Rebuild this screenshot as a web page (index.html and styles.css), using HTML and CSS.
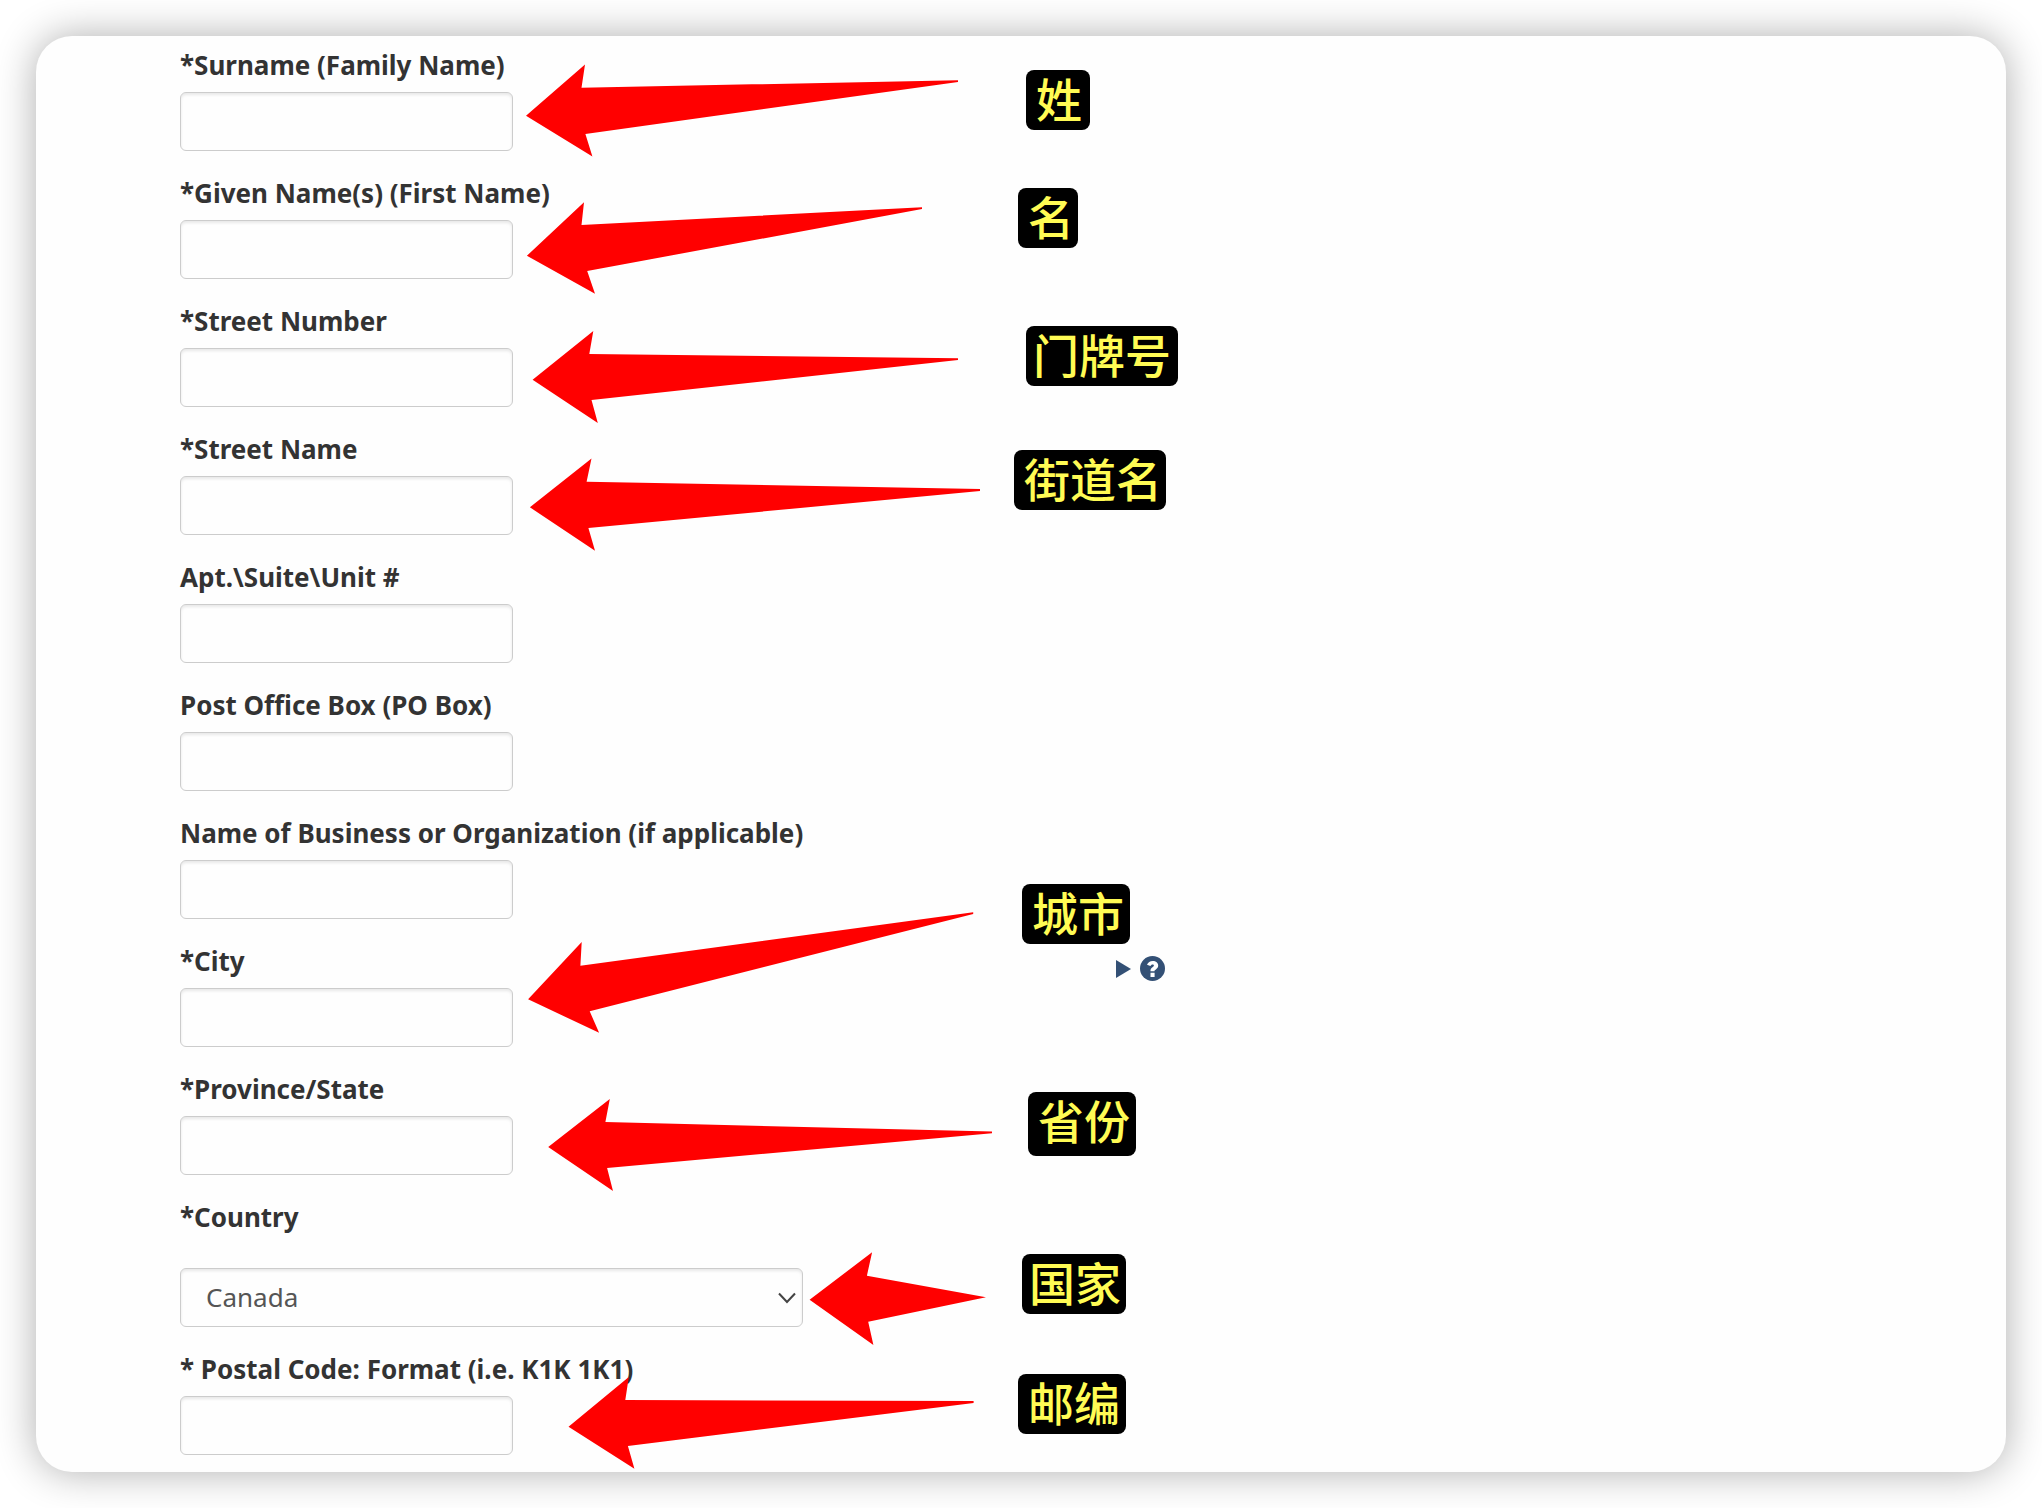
FILE: index.html
```html
<!DOCTYPE html>
<html lang="en">
<head>
<meta charset="utf-8">
<title>Address form</title>
<link rel="stylesheet" href="styles.css">
</head>
<body>
<main class="card">
  <form class="form">
    <div class="field"><label for="surname">*Surname (Family Name)</label><input class="control" id="surname" type="text"></div>
    <div class="field"><label for="given">*Given Name(s) (First Name)</label><input class="control" id="given" type="text"></div>
    <div class="field"><label for="street-number">*Street Number</label><input class="control" id="street-number" type="text"></div>
    <div class="field"><label for="street-name">*Street Name</label><input class="control" id="street-name" type="text"></div>
    <div class="field"><label for="unit">Apt.\Suite\Unit #</label><input class="control" id="unit" type="text"></div>
    <div class="field"><label for="po-box">Post Office Box (PO Box)</label><input class="control" id="po-box" type="text"></div>
    <div class="field"><label for="business">Name of Business or Organization (if applicable)</label><input class="control" id="business" type="text"></div>
    <div class="field">
      <div class="field-head">
        <label for="city">*City</label>
        <details class="help">
          <summary aria-label="Help">
            <svg class="marker" width="15" height="18" viewBox="0 0 15 18"><path d="M0 0 15 9 0 18z"/></svg>
            <svg width="25" height="25" viewBox="0 0 25 25"><circle cx="12.500" cy="12.500" r="12.500"/><path class="mark" d="M7 8.800C8 6.400 10 5 12.800 5c3.200 0 5.400 1.800 5.400 4.600 0 1.800-.9 2.900-2.300 3.800-1.100.7-1.400 1-1.400 1.700v.1h-4v-.6c0-1.600.6-2.400 2-3.300 1-.7 1.400-1 1.400-1.700 0-.7-.5-1.100-1.300-1.100-1 0-1.600.5-2.200 1.600zM10.500 16.700h4.100v4.200h-4.100z"/></svg>
          </summary>
        </details>
      </div>
      <input class="control" id="city" type="text">
    </div>
    <div class="field"><label for="province">*Province/State</label><input class="control" id="province" type="text"></div>
    <div class="field field-select">
      <label for="country">*Country</label>
      <div class="select">
        <select class="control" id="country"><option>Canada</option></select>
        <svg class="chevron" width="18" height="12" viewBox="0 0 18 12"><path d="M1 1.500 9 10 17 1.500"/></svg>
      </div>
    </div>
    <div class="field"><label for="postal">* Postal Code: Format (i.e. K1K 1K1)</label><input class="control" id="postal" type="text"></div>
  </form>

  <div class="notes" lang="zh-CN">
    <svg class="arrows" width="1970" height="1436" viewBox="36 36 1970 1436" aria-hidden="true">
      <path d="M526 115.700 585 64.500 581.500 87.700 958 80.300V82L585.400 134 592.400 156.500z"/>
      <path d="M526.900 255.700 584 202.200 581.500 225 922 207.200V209L587.200 271 595 293.800z"/>
      <path d="M532.600 379.700 593.300 331 589.300 354 958 358.300V360L591.500 400 597.800 423z"/>
      <path d="M529.900 507.300 591.500 458.600 586.600 481.700 980 489V491L588.400 528 595 550.800z"/>
      <path d="M528.100 999.300 581.700 942 580.400 965.700 973.200 912.200V914L589.700 1011.300 599.100 1032.800z"/>
      <path d="M548.200 1147 609.800 1099 605.400 1122 992 1131.600V1133.300L607.100 1168 613 1191z"/>
      <path d="M809.600 1299.700 872.100 1252.300 866.900 1275.700 986 1297.300 868.200 1321.700 873.400 1345z"/>
      <path d="M568.500 1426.700 628.800 1377 625.300 1400 973.600 1401V1403L627.900 1446 634.400 1468.800z"/>
    </svg>
    <span class="note note-surname">姓</span>
    <span class="note note-given">名</span>
    <span class="note note-number">门牌号</span>
    <span class="note note-street">街道名</span>
    <span class="note note-city">城市</span>
    <span class="note note-province">省份</span>
    <span class="note note-country">国家</span>
    <span class="note note-postal">邮编</span>
  </div>
</main>
</body>
</html>
```
FILE: styles.css
```css
* { box-sizing: border-box; }

body {
  margin: 0;
  padding: 36px;
  background: #fff;
  color: #333;
  font: 26px/36px "Noto Sans", "Noto Sans CJK SC", sans-serif;
}

.card {
  position: relative;
  padding: 11px 24px 17px 144px;
  border-radius: 36px;
  background: #fefefe;
  box-shadow: 0 0 40px rgba(0, 0, 0, .32);
}

.form {
  display: flex;
  flex-direction: column;
  gap: 24px;
}

.field {
  display: flex;
  flex-direction: column;
  align-items: flex-start;
  gap: 9px;
}

.field-select { gap: 33px; }

label { font-weight: 700; }

.field-head {
  display: grid;
  grid-template-columns: 936px auto;
  height: 36px;
}

.help { padding-top: 13px; }

.help summary {
  display: flex;
  align-items: center;
  gap: 9px;
  list-style: none;
  cursor: pointer;
}

.help svg { display: block; fill: #335075; }
.help .mark { fill: #fff; }

.control {
  display: block;
  width: 333px;
  height: 59px;
  margin: 0;
  padding: 0 25px 2px;
  border: 1px solid #ccc;
  border-radius: 6px;
  background: #fefefe;
  box-shadow: inset 0 2px 3px rgba(0, 0, 0, .09);
  color: #555;
  font: inherit;
}

.select { position: relative; }

.select .control {
  width: 623px;
  appearance: none;
}

.chevron {
  position: absolute;
  top: 24px;
  right: 7px;
  fill: none;
  stroke: #444;
  stroke-width: 2;
  pointer-events: none;
}

.notes {
  position: absolute;
  inset: 0;
  pointer-events: none;
}

.arrows {
  position: absolute;
  top: 0;
  left: 0;
  fill: #f00;
}

.note {
  position: absolute;
  width: 108px;
  height: 60px;
  padding-left: 10px;
  border-radius: 8px;
  background: #000;
  color: #fffb54;
  font: 500 46px/54px "Noto Sans CJK SC", sans-serif;
  white-space: nowrap;
}

.note-surname { top: 34px; left: 990px; width: 64px; }
.note-given { top: 152px; left: 982px; width: 60px; }
.note-number { top: 290px; left: 990px; width: 152px; padding-left: 7px; }
.note-street { top: 414px; left: 978px; width: 152px; }
.note-city { top: 848px; left: 986px; }
.note-province { top: 1056px; left: 992px; height: 64px; }
.note-country { top: 1218px; left: 986px; width: 104px; padding-left: 7px; }
.note-postal { top: 1338px; left: 982px; }
```
